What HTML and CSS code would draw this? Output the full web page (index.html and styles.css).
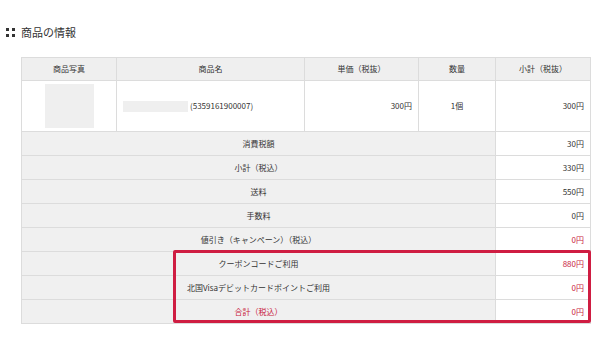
FILE: index.html
```html
<!DOCTYPE html>
<html lang="ja">
<head>
    <meta charset="UTF-8">
    <meta name="viewport" content="width=device-width, initial-scale=1.0">
    <title>商品の情報</title>
    <link rel="stylesheet" href="styles.css">
</head>
<body>
    <h2 class="section-title">
        <span class="dots"><i></i><i></i><i></i><i></i></span>
        商品の情報
    </h2>

    <div class="order-box">
        <table class="order-table">
            <colgroup>
                <col class="c-photo">
                <col class="c-name">
                <col class="c-price">
                <col class="c-qty">
                <col class="c-sub">
            </colgroup>
            <thead>
                <tr>
                    <th>商品写真</th>
                    <th>商品名</th>
                    <th>単価（税抜）</th>
                    <th>数量</th>
                    <th>小計（税抜）</th>
                </tr>
            </thead>
            <tbody>
                <tr class="item">
                    <td class="photo"><div class="thumb"></div></td>
                    <td class="name"><span class="name-bar"></span>(5359161900007)</td>
                    <td class="num">300円</td>
                    <td class="center">1個</td>
                    <td class="num">300円</td>
                </tr>
                <tr class="sum">
                    <td colspan="4" class="label">消費税額</td>
                    <td class="num">30円</td>
                </tr>
                <tr class="sum">
                    <td colspan="4" class="label">小計（税込）</td>
                    <td class="num">330円</td>
                </tr>
                <tr class="sum">
                    <td colspan="4" class="label">送料</td>
                    <td class="num">550円</td>
                </tr>
                <tr class="sum">
                    <td colspan="4" class="label">手数料</td>
                    <td class="num">0円</td>
                </tr>
                <tr class="sum">
                    <td colspan="4" class="label">値引き（キャンペーン）（税込）</td>
                    <td class="num red">0円</td>
                </tr>
                <tr class="sum">
                    <td colspan="4" class="label">クーポンコードご利用</td>
                    <td class="num red">880円</td>
                </tr>
                <tr class="sum">
                    <td colspan="4" class="label">北国Visaデビットカードポイントご利用</td>
                    <td class="num red">0円</td>
                </tr>
                <tr class="sum">
                    <td colspan="4" class="label red">合計（税込）</td>
                    <td class="num red">0円</td>
                </tr>
            </tbody>
        </table>
        <div class="highlight"></div>
    </div>
</body>
</html>
```

FILE: styles.css
```css
body {
    margin: 0;
    padding: 0;
    background: #fff;
    color: #333;
    font-family: "Noto Sans CJK JP", "Noto Sans", sans-serif;
}

.section-title {
    display: flex;
    align-items: center;
    gap: 6px;
    margin: 0;
    padding: 24px 0 0 6px;
    height: 16px;
    font-size: 11px;
    font-weight: normal;
    color: #333;
}
.dots {
    display: grid;
    grid-template-columns: 3px 3px;
    grid-template-rows: 3px 3px;
    gap: 3px;
}
.dots i {
    background: #333;
}

.order-box {
    position: relative;
    width: 569px;
    margin: 17px 0 0 21px;
}

.order-table {
    width: 100%;
    border-collapse: collapse;
    table-layout: fixed;
    font-size: 8px;
}
.c-photo { width: 95px; }
.c-name { width: 188px; }
.c-price { width: 114px; }
.c-qty { width: 77px; }
.c-sub { width: 95px; }

.order-table th,
.order-table td {
    border: 1px solid #dcdcdc;
    padding: 0 6px;
    line-height: 1;
    white-space: nowrap;
}
.order-table th {
    height: 22px;
    background: #efefef;
    font-weight: normal;
    text-align: center;
}
.item td {
    height: 50px;
    background: #fff;
}
.photo {
    text-align: center;
}
.thumb {
    width: 49px;
    height: 44px;
    margin: 0 auto;
    background: #efefef;
}
.name-bar {
    display: inline-block;
    width: 65px;
    height: 11px;
    margin-right: 2px;
    vertical-align: middle;
    background: #efefef;
}
.num {
    text-align: right;
}
.center {
    text-align: center;
}

.sum td {
    height: 23px;
    background: #fff;
}
.sum .label {
    background: #f0f0f0;
    text-align: center;
}
.red {
    color: #c8193c;
}

/* marks the coupon / point / total rows */
.highlight {
    position: absolute;
    left: 152px;
    top: 193px;
    width: 418px;
    height: 73px;
    box-sizing: border-box;
    border: 3px solid #cf1d42;
    border-radius: 2px;
    pointer-events: none;
}
```
